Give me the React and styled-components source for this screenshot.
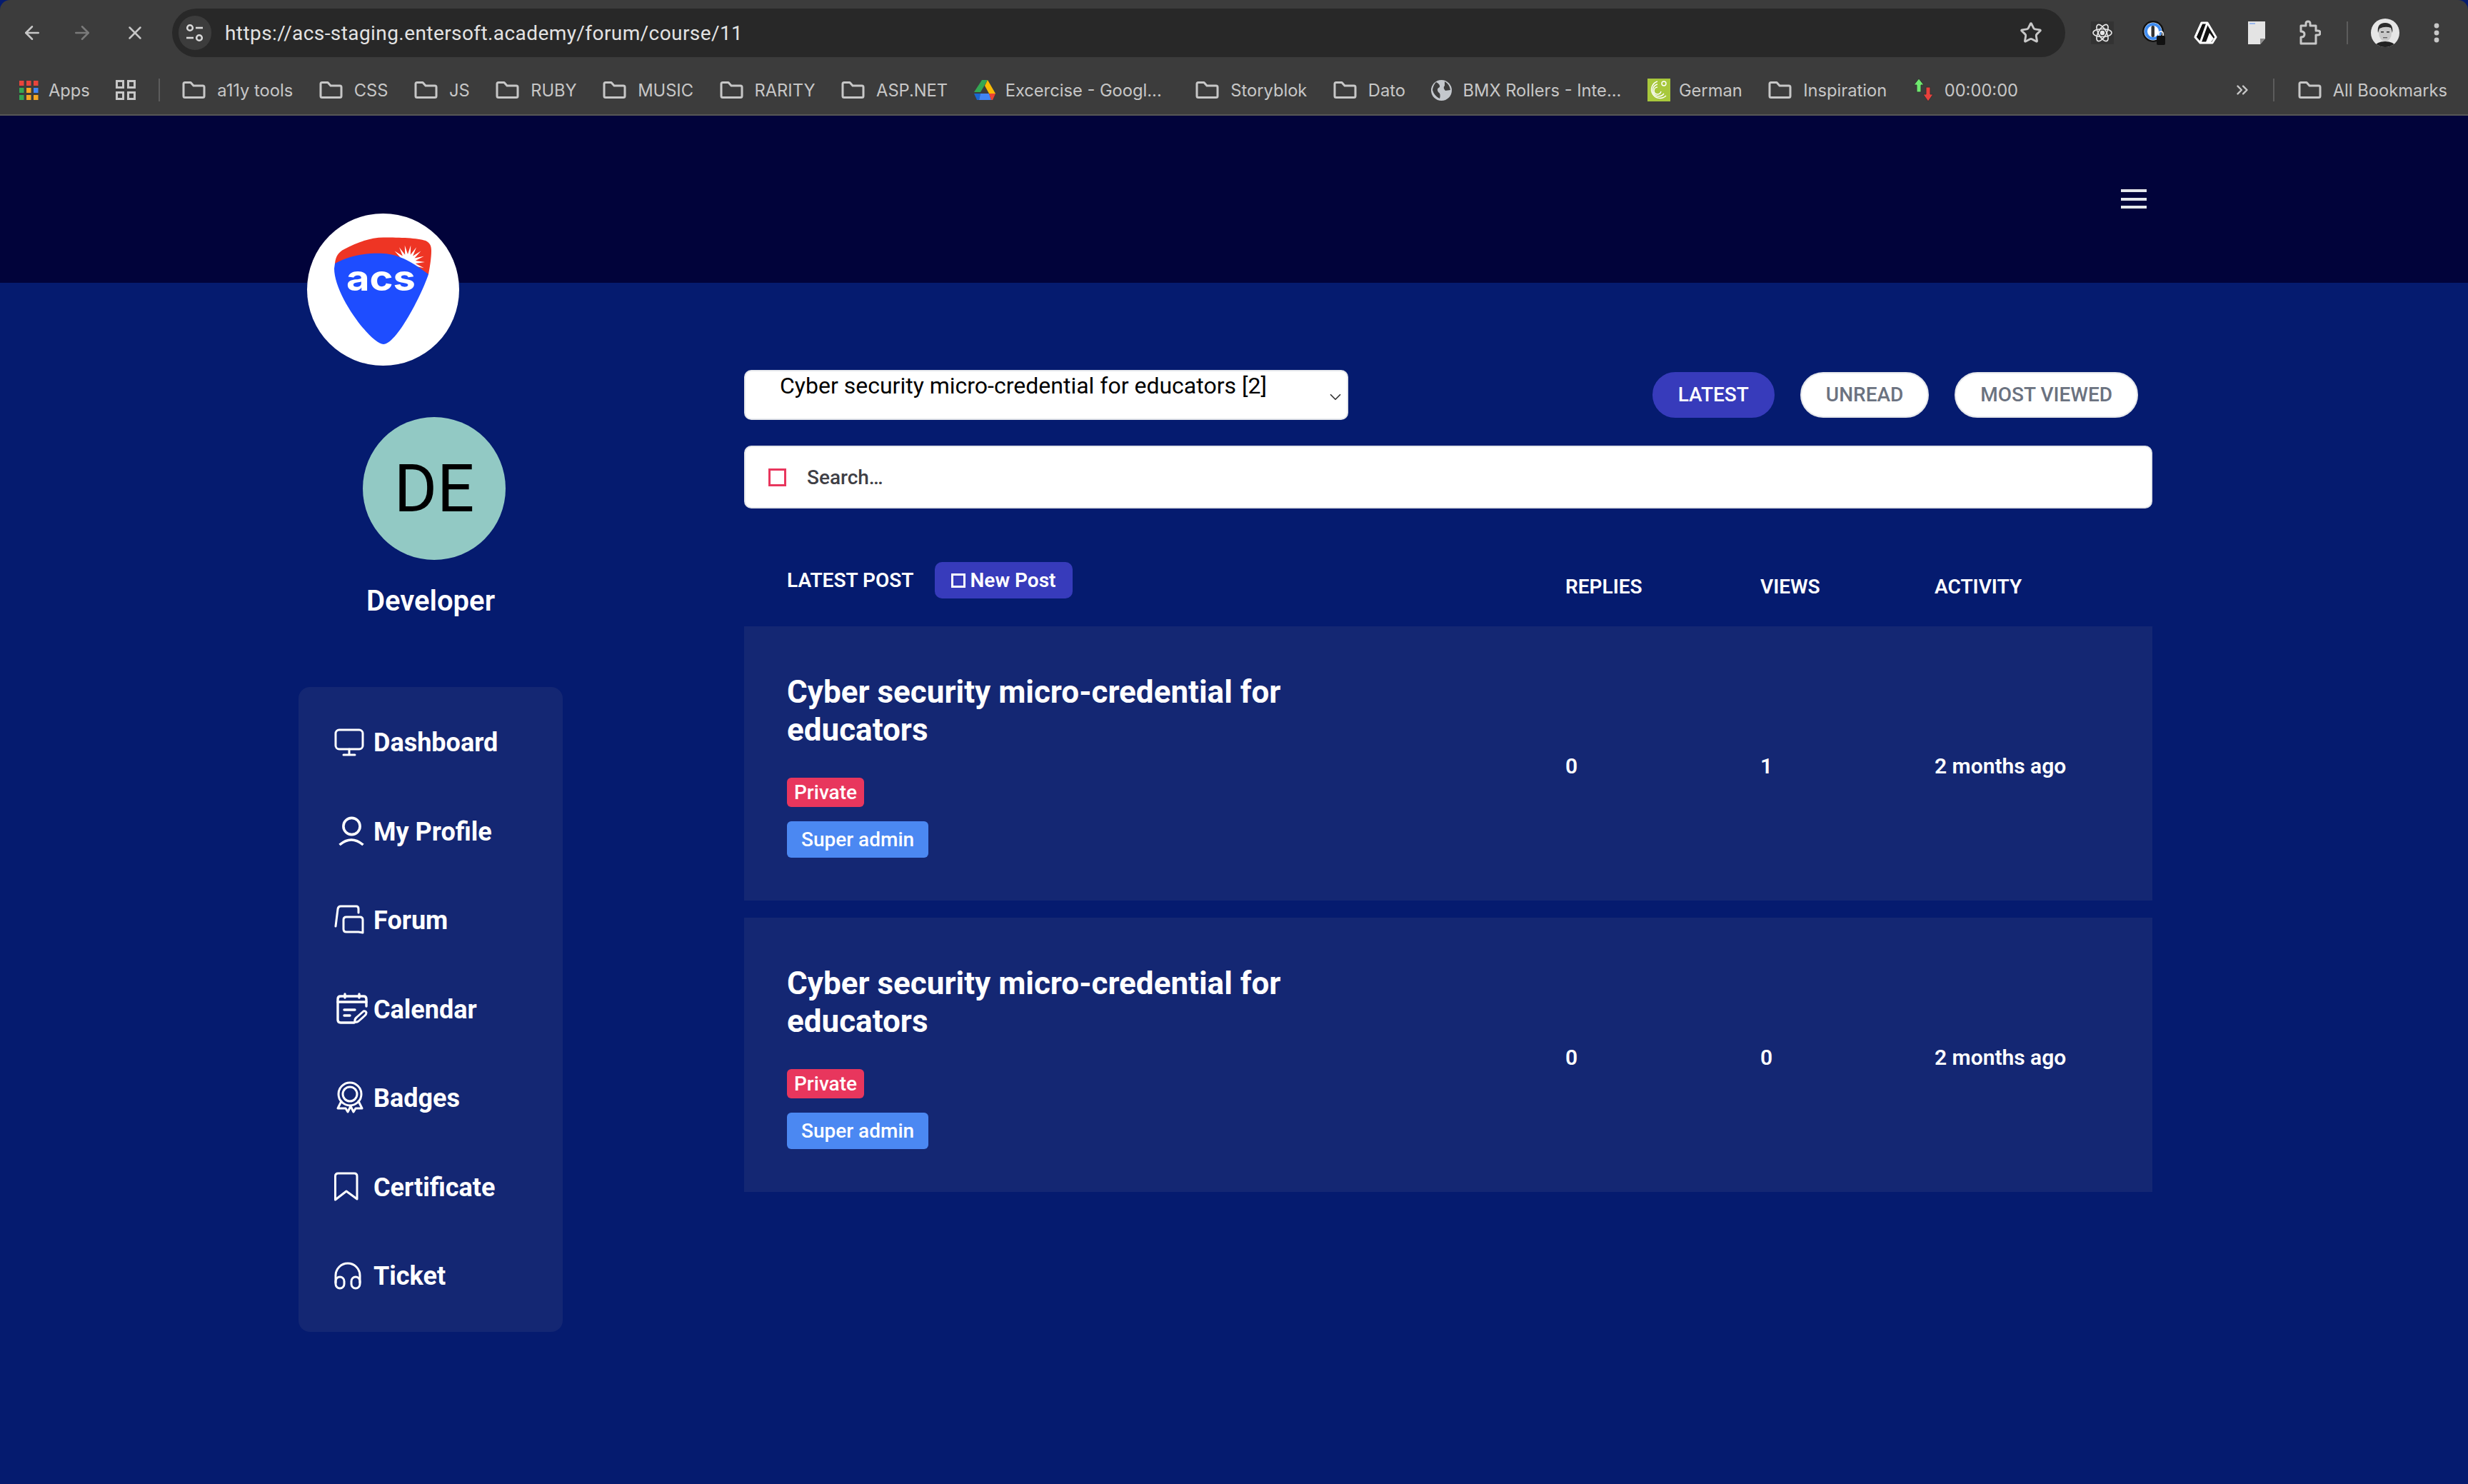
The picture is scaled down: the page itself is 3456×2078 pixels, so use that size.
import React from "react";
import styled, { createGlobalStyle } from "styled-components";
import { ArrowLeft, ArrowRight, X, Star, ChevronsRight, ChevronDown } from "lucide-react";

const GlobalStyle = createGlobalStyle`
  html, body { margin: 0; padding: 0; background: #051b6f; }
  body { font-family: Roboto, "Liberation Sans", sans-serif; }
  * { box-sizing: border-box; }
`;

const Page = styled.div`
  width: 3456px;
  height: 2078px;
  overflow: hidden;
  background: #051b6f;
`;

/* browser chrome */
const Chrome = styled.div`
  height: 162px;
  background: #3c3c3c;
  border-radius: 14px 14px 0 0;
  border-bottom: 2px solid #565656;
  font-family: Inter, Roboto, sans-serif;
`;

const Toolbar = styled.div`
  height: 92px;
  display: flex;
  align-items: flex-start;
  padding: 12px 0 0 30px;
  color: #c7c7c7;
`;

const NavButtons = styled.div`
  display: flex;
  align-items: center;
  gap: 40px;
  height: 68px;
  width: 211px;
  svg { display: block; }
  svg:last-child { margin-left: 4px; }
`;

const Omnibox = styled.div`
  width: 2651px;
  height: 68px;
  background: #282828;
  border-radius: 34px;
  display: flex;
  align-items: center;
  padding: 0 32px 0 9px;
`;

const SiteChip = styled.div`
  width: 46px;
  height: 48px;
  border-radius: 24px;
  background: #3c3c3c;
  display: flex;
  align-items: center;
  justify-content: center;
  margin-right: 19px;
`;

const Url = styled.div`
  flex: 1;
  font-family: Roboto, sans-serif;
  font-size: 28px;
  letter-spacing: 0.42px;
  color: #e3e3e3;
`;

const Extensions = styled.div`
  display: flex;
  align-items: center;
  height: 68px;
  padding-left: 36px;
  svg { display: block; flex: none; }
`;

const ExtSlot = styled.div`
  width: ${(p) => p.$w || 72}px;
  display: flex;
  justify-content: flex-start;
`;

const VSep = styled.div`
  width: 2px;
  height: 32px;
  background: #5c5c5c;
  flex: none;
  margin: 0 ${(p) => p.$mr || 0}px 0 ${(p) => p.$ml || 0}px;
`;

const Bookmarks = styled.div`
  height: 68px;
  display: flex;
  align-items: center;
  padding: 0 29px 0 27px;
  gap: 36.5px;
  color: #c7c7c7;
  font-size: 23.7px;
  svg { display: block; flex: none; }
`;

const Mark = styled.div`
  display: flex;
  align-items: center;
  gap: ${(p) => p.$gap || 16}px;
  margin-right: ${(p) => p.$after || 0}px;
  white-space: nowrap;
`;

const Spacer = styled.div`
  flex: 1;
`;

const OverflowSlot = styled.div`
  margin-right: -6px;
`;

/* page header */
const Hero = styled.header`
  position: relative;
  height: 234px;
  background: #01033a;
  display: flex;
  justify-content: flex-end;
  padding: 103px 450px 0 0;
`;

const Hamburger = styled.div`
  width: 36px;
  height: 27px;
  display: flex;
  flex-direction: column;
  gap: 7.5px;
  span {
    display: block;
    height: 4px;
    background: #e5e7eb;
  }
`;

const LogoBadge = styled.div`
  position: absolute;
  left: 430px;
  top: 137px;
  width: 213px;
  height: 213px;
  border-radius: 50%;
  background: #fff;
  svg { display: block; }
`;

const Body = styled.div`
  display: flex;
  align-items: flex-start;
  padding-left: 418px;
`;

/* sidebar */
const Sidebar = styled.aside`
  width: 370px;
  flex: none;
  display: flex;
  flex-direction: column;
  align-items: center;
  padding-top: 188px;
  margin-right: 254px;
`;

const Avatar = styled.div`
  width: 200px;
  height: 200px;
  border-radius: 50%;
  background: #92c9c4;
  color: #000;
  font-size: 92px;
  display: flex;
  align-items: center;
  justify-content: center;
  margin-left: 10px;
`;

const UserName = styled.div`
  margin-top: 32px;
  font-size: 40px;
  line-height: 52px;
  font-weight: 600;
  color: #fff;
`;

const NavPanel = styled.nav`
  width: 100%;
  margin-top: 94px;
  height: 903px;
  background: #142773;
  border-radius: 16px;
  padding: 16px 0 0 48px;
`;

const NavRow = styled.div`
  height: 124.5px;
  display: flex;
  align-items: center;
  font-size: 36px;
  font-weight: 700;
  color: #fff;
  svg { display: block; flex: none; margin-right: 7px; margin-top: -4px; }
`;

/* main column */
const Main = styled.main`
  width: 1972px;
  flex: none;
  padding-top: 122px;
`;

const TopRow = styled.div`
  display: flex;
  align-items: flex-start;
  justify-content: space-between;
  padding-right: 20px;
`;

const CourseSelect = styled.div`
  width: 846px;
  height: 70px;
  background: #fff;
  border: 2px solid #e5e7eb;
  border-radius: 10px;
  padding: 0 3px 0 48px;
  display: flex;
  justify-content: space-between;
  font-size: 32px;
  line-height: 38px;
  color: #000;
  span { padding-top: 1px; }
  svg { display: block; margin-top: 23px; }
`;

const Tabs = styled.div`
  display: flex;
  gap: 36px;
  margin-top: 3px;
`;

const Tab = styled.div`
  height: 64px;
  padding: 0 34px 2px;
  border-radius: 32px;
  display: flex;
  align-items: center;
  font-size: 28px;
  font-weight: 500;
  border: 2px solid ${(p) => (p.$active ? "#373bbb" : "#e5e7eb")};
  background: ${(p) => (p.$active ? "#373bbb" : "#fff")};
  color: ${(p) => (p.$active ? "#fff" : "#6b7280")};
`;

const SearchBox = styled.div`
  margin-top: 36px;
  height: 88px;
  background: #fff;
  border: 2px solid #e5e7eb;
  border-radius: 10px;
  padding-left: 32px;
  display: flex;
  align-items: center;
  font-size: 28px;
  font-weight: 500;
  color: #3f3f46;
`;

const MissingGlyph = styled.span`
  display: block;
  flex: none;
  width: ${(p) => p.$size}px;
  height: ${(p) => p.$size}px;
  border: ${(p) => p.$weight}px solid ${(p) => p.$color};
  margin-right: ${(p) => p.$gap}px;
`;

const Columns = styled.div`
  display: grid;
  grid-template-columns: 1090px 273px 244px 1fr;
  padding-left: 60px;
`;

const HeadRow = styled(Columns)`
  margin-top: 75px;
  height: 51px;
  align-items: flex-start;
  color: #fff;
  font-size: 28px;
  font-weight: 600;
`;

const HeadLead = styled.div`
  display: flex;
  align-items: center;
  height: 51px;
  gap: 29px;
`;

const NewPost = styled.div`
  height: 51px;
  padding: 0 23px;
  border-radius: 10px;
  background: #373bbb;
  display: flex;
  align-items: center;
`;

const HeadCell = styled.div`
  padding-top: 18px;
  line-height: 33px;
`;

const Cards = styled.div`
  margin-top: 39px;
  display: flex;
  flex-direction: column;
  gap: 24px;
`;

const Card = styled(Columns)`
  height: 384px;
  background: #142773;
  align-items: center;
  color: #fff;
`;

const CardLead = styled.div`
  display: flex;
  flex-direction: column;
  align-items: flex-start;
  padding-top: 4px;
`;

const CardTitle = styled.h2`
  margin: 1px 0 -1px;
  width: 760px;
  font-size: 44px;
  line-height: 53px;
  font-weight: 700;
`;

const Tag = styled.span`
  display: block;
  height: ${(p) => p.$h}px;
  line-height: ${(p) => p.$h}px;
  margin-top: ${(p) => p.$top}px;
  padding: 0 ${(p) => p.$pad}px;
  border-radius: 6px;
  font-size: 28px;
  font-weight: 500;
  background: ${(p) => p.$bg};
`;

const Stat = styled.div`
  padding-top: 6px;
  font-size: 30px;
  font-weight: 600;
`;

/* drawn icons */
const Folder = () => (
  <svg width="33" height="24" viewBox="0 0 33 24" fill="none" stroke="#c7c7c7" strokeWidth="3" strokeLinejoin="round">
    <path d="M2 3.5 Q2 1.5 4 1.5 H12 L16 6 H29 Q31 6 31 8 V20.5 Q31 22.5 29 22.5 H4 Q2 22.5 2 20.5 Z" />
  </svg>
);

const AppsGrid = () => {
  const colors = ["#e8453c", "#e8453c", "#e8453c", "#34a853", "#f5a623", "#4285f4", "#34a853", "#f5a623", "#f5a623"];
  return (
    <svg width="27" height="27" viewBox="0 0 27 27">
      {colors.map((c, i) => (
        <rect key={i} x={(i % 3) * 10} y={Math.floor(i / 3) * 10} width="6.5" height="7" fill={c} />
      ))}
    </svg>
  );
};

const TabGroups = () => (
  <svg width="28" height="28" viewBox="0 0 28 28" fill="none" stroke="#c7c7c7" strokeWidth="3">
    <rect x="1.5" y="1.5" width="9" height="9" />
    <rect x="17.5" y="1.5" width="9" height="9" />
    <rect x="1.5" y="17.5" width="9" height="9" />
    <rect x="17.5" y="17.5" width="9" height="9" />
  </svg>
);

const DriveIcon = () => (
  <svg width="30" height="28" viewBox="0 0 30 28">
    <path d="M11 0 H19 L9 17 H0 Z" fill="#34a853" />
    <path d="M19 0 L30 19 H21 L15 8 Z" fill="#fbbc04" />
    <path d="M0 19 H9 L7 28 H4 Z" fill="#1967d2" />
    <path d="M9 19 H21 L24 28 H7 Z" fill="#4285f4" />
    <path d="M21 19 H30 L26 28 H24 Z" fill="#ea4335" />
  </svg>
);

const GlobeIcon = () => (
  <svg width="29" height="29" viewBox="0 0 29 29">
    <circle cx="14.5" cy="14.5" r="14.5" fill="#c3c7cc" />
    <path d="M7 3 Q13 6 12 10 Q7 12 10 17 Q14 19 12 26 Q4 22 2 14 Q3 7 7 3 Z M19 2 Q26 6 27 14 L20 15 Q16 11 19 8 Z" fill="#3c3c3c" />
  </svg>
);

const GoetheIcon = () => (
  <svg width="32" height="32" viewBox="0 0 32 32" fill="none" stroke="#fff" strokeWidth="1.4">
    <rect width="32" height="32" fill="#a8c83c" stroke="none" />
    <path d="M14 4 A12 12 0 1 0 26 24" />
    <path d="M14 8 A8.5 8.5 0 1 0 23 21" />
    <path d="M14 12 A5 5 0 1 0 19 18" />
    <circle cx="23" cy="7" r="3" />
  </svg>
);

const TimerArrows = () => (
  <svg width="31" height="32" viewBox="0 0 31 32">
    <path d="M8 0 L15 9 H11 V19 H5 V9 H1 Z" fill="#6ee86e" stroke="#333" strokeWidth="1" />
    <path d="M21 32 L14 22 H18 V12 H24 V22 H28 Z" fill="#e8413c" stroke="#333" strokeWidth="1" />
  </svg>
);

const TuneIcon = () => (
  <svg width="28" height="28" viewBox="0 0 28 28" fill="none" stroke="#d8d8d8" strokeWidth="2.6">
    <circle cx="7" cy="7" r="3.8" />
    <path d="M15 7 H25" />
    <path d="M2 21 H12" />
    <circle cx="20" cy="21" r="3.8" />
  </svg>
);

const ReactExt = () => (
  <svg width="32" height="32" viewBox="0 0 32 32" fill="none" stroke="#e8e8e8" strokeWidth="1.6">
    <rect width="32" height="32" fill="#333" stroke="none" />
    <ellipse cx="16" cy="16" rx="13" ry="5.5" />
    <ellipse cx="16" cy="16" rx="13" ry="5.5" transform="rotate(60 16 16)" />
    <ellipse cx="16" cy="16" rx="13" ry="5.5" transform="rotate(120 16 16)" />
    <circle cx="16" cy="16" r="2.4" fill="#e8e8e8" />
  </svg>
);

const PasswordExt = () => (
  <svg width="34" height="34" viewBox="0 0 34 34">
    <circle cx="15" cy="15" r="15" fill="#111" />
    <circle cx="15" cy="15" r="12.5" fill="#fff" />
    <circle cx="15" cy="15" r="10" fill="none" stroke="#3f8cf0" strokeWidth="4" />
    <rect x="12.5" y="7" width="4.5" height="16" rx="2" fill="#333" />
    <rect x="20" y="21" width="12" height="13" rx="2" fill="#111" />
    <path d="M23 21 V18 A3 3 0 0 1 29 18 V21" fill="none" stroke="#fff" strokeWidth="1.6" />
  </svg>
);

const PrismExt = () => (
  <svg width="33" height="32" viewBox="0 0 33 32" fill="none" stroke="#fff" strokeWidth="3" strokeLinejoin="round">
    <path d="M11 2 H19 L31 22 L26 30 H9 L2 22 Z" fill="#111" />
    <path d="M11 2 L2 22 M19 2 L9 30" />
    <path d="M22 16 L28 24 L24 29 L17 29 Z" fill="#fff" stroke="none" />
  </svg>
);

const SheetExt = () => (
  <svg width="24" height="32" viewBox="0 0 24 32">
    <path d="M0 0 H24 V24 L17 32 H0 Z" fill="#e4e4e4" />
    <path d="M2 2 H10 V4 H2 Z" fill="#9ab8ee" />
    <path d="M24 24 L17 32 V24 Z" fill="#8a8a8a" />
  </svg>
);

const ExtensionsIcon = () => (
  <svg width="32" height="36" viewBox="0 0 32 36" fill="none" stroke="#c7c7c7" strokeWidth="3" strokeLinejoin="round">
    <path d="M4 8 H11 V5 Q11 2 14 2 Q17 2 17 5 V8 H25 V15 H28 Q31 15 31 18 Q31 21 28 21 H25 V33 H4 V24 Q9 24 9 20 Q9 16 4 16 Z" />
  </svg>
);

const ProfilePic = () => (
  <svg width="40" height="40" viewBox="0 0 40 40">
    <defs>
      <clipPath id="pic">
        <circle cx="20" cy="20" r="20" />
      </clipPath>
    </defs>
    <g clipPath="url(#pic)">
      <rect width="40" height="40" fill="#e6e6e6" />
      <ellipse cx="20" cy="20" rx="9" ry="12" fill="#c9c9c9" />
      <path d="M10 20 Q8 6 20 6 Q32 6 30 20 L28 13 Q20 10 12 14 Z" fill="#2b2b2b" />
      <rect x="14" y="18" width="4" height="1.6" fill="#333" />
      <rect x="22" y="18" width="4" height="1.6" fill="#333" />
      <rect x="17" y="26" width="6" height="1.4" fill="#666" />
      <path d="M4 40 Q8 32 20 32 Q32 32 36 40 Z" fill="#222" />
    </g>
  </svg>
);

const MoreDots = () => (
  <svg width="8" height="28" viewBox="0 0 8 28" fill="#c7c7c7">
    <circle cx="4" cy="4" r="3.4" />
    <circle cx="4" cy="14" r="3.4" />
    <circle cx="4" cy="24" r="3.4" />
  </svg>
);

const sunRays = () => {
  const cx = 141;
  const cy = 68;
  const pts = [];
  for (let a = 160; a <= 400; a += 10) {
    const long = (a - 160) % 20 === 0;
    const r = long ? (a === 160 || a === 400 ? 32 : 24) : 11;
    const rad = (a * Math.PI) / 180;
    pts.push(`${(cx + r * Math.cos(rad)).toFixed(1)},${(cy + r * Math.sin(rad)).toFixed(1)}`);
  }
  return pts.join(" ");
};

const AcsLogo = () => (
  <svg width="213" height="213" viewBox="0 0 213 213">
    <path
      d="M39 70 C40 60 44 54 52 50 C70 40 90 33.4 107 33.4 C130 33.4 155 34 166 38 C172 41 174 45 174 52 C174 62 172 75 170 85 L100 90 Z"
      fill="#ee3524"
    />
    <polygon points={sunRays()} fill="#fff" />
    <path
      d="M39 70 C60 58 85 55 107 56 C130 57 150 70 170 85 C160 115 125 183 107 183 C90 183 38 115 38 77 Z"
      fill="#1e4dff"
    />
    <text x="55" y="108" fontFamily="Inter, sans-serif" fontWeight="700" fontSize="50" fill="#fff" textLength="97" lengthAdjust="spacingAndGlyphs">
      acs
    </text>
  </svg>
);

const NavGlyph = ({ children }) => (
  <svg width="50" height="50" viewBox="0 0 50 50" fill="none" stroke="#fff" strokeWidth="3" strokeLinecap="round" strokeLinejoin="round">
    {children}
  </svg>
);

const navItems = [
  {
    label: "Dashboard",
    icon: (
      <>
        <rect x="4" y="9" width="38" height="27" rx="5" />
        <path d="M23 36 V44 M15 44 H31" />
      </>
    ),
  },
  {
    label: "My Profile",
    icon: (
      <>
        <circle cx="26.5" cy="19" r="11.6" strokeWidth="3.6" />
        <path d="M9.5 45 Q26 31 42.5 45" strokeWidth="3.6" strokeLinecap="butt" />
      </>
    ),
  },
  {
    label: "Forum",
    icon: (
      <>
        <path d="M4 35 L7 11 Q7.5 7 11 7 H33 Q36 7 36 11 V16" />
        <path d="M19 22 H38 Q42 22 42 26 V44 L36 43 H19 Q15 43 15 39 V26 Q15 22 19 22 Z" />
      </>
    ),
  },
  {
    label: "Calendar",
    icon: (
      <>
        <path d="M30 45 H11 Q7 45 7 41 V12 Q7 8 11 8 H43 Q47 8 47 12 V22" strokeWidth="3.4" />
        <path d="M7 16 H47 M17 5 V10 M37 5 V10 M16 27 H31 M16 35 H24" strokeWidth="3.4" />
        <path d="M31 44 Q30 40 34 37 L43 29 Q46 28 47 31 Q47 33 45 35 L36 43 Q33 45 31 44 Z" />
      </>
    ),
  },
  {
    label: "Badges",
    icon: (
      <>
        <circle cx="24" cy="21" r="16" />
        <circle cx="24" cy="21" r="10" />
        <path d="M12 31 L7 41 L18 41 L21 46 L25 38 L29 46 L32 41 L41 41 L36 31" />
      </>
    ),
  },
  {
    label: "Certificate",
    icon: <path d="M3.5 11 Q3.5 7 7.5 7 H30 Q34 7 34 11 V43 L19 32 L3.5 44 Z" />,
  },
  {
    label: "Ticket",
    icon: (
      <>
        <path d="M4 36 V26 A17 17 0 0 1 38 26 V36" />
        <rect x="4" y="28" width="12" height="16" rx="6" />
        <rect x="26" y="28" width="12" height="16" rx="6" />
      </>
    ),
  },
];

const folderMarks = (names) =>
  names.map((name) => (
    <Mark key={name}>
      <Folder />
      {name}
    </Mark>
  ));

const posts = [
  { id: 1, replies: 0, views: 1 },
  { id: 2, replies: 0, views: 0 },
];

const App = () => {
  return (
    <Page>
      <GlobalStyle />
      <Chrome>
        <Toolbar>
          <NavButtons>
            <ArrowLeft size={30} color="#c7c7c7" strokeWidth={2} />
            <ArrowRight size={30} color="#7a7a7a" strokeWidth={2} />
            <X size={30} color="#c7c7c7" strokeWidth={2} />
          </NavButtons>
          <Omnibox>
            <SiteChip>
              <TuneIcon />
            </SiteChip>
            <Url>https://acs-staging.entersoft.academy/forum/course/11</Url>
            <Star size={32} color="#c7c7c7" strokeWidth={2.2} />
          </Omnibox>
          <Extensions>
            <ExtSlot><ReactExt /></ExtSlot>
            <ExtSlot><PasswordExt /></ExtSlot>
            <ExtSlot $w={76}><PrismExt /></ExtSlot>
            <ExtSlot $w={70}><SheetExt /></ExtSlot>
            <ExtSlot $w={68}><ExtensionsIcon /></ExtSlot>
            <VSep />
            <ExtSlot $w={32} />
            <ExtSlot $w={88}><ProfilePic /></ExtSlot>
            <MoreDots />
          </Extensions>
        </Toolbar>
        <Bookmarks>
          <Mark $gap={14}>
            <AppsGrid />
            Apps
          </Mark>
          <TabGroups />
          <VSep $ml={-5} $mr={-5} />
          {folderMarks(["a11y tools", "CSS", "JS", "RUBY", "MUSIC", "RARITY", "ASP.NET"])}
          <Mark $gap={14} $after={11}>
            <DriveIcon />
            Excercise - Googl...
          </Mark>
          {folderMarks(["Storyblok", "Dato"])}
          <Mark $gap={15}>
            <GlobeIcon />
            BMX Rollers - Inte...
          </Mark>
          <Mark $gap={12}>
            <GoetheIcon />
            German
          </Mark>
          {folderMarks(["Inspiration"])}
          <Mark $gap={13}>
            <TimerArrows />
            00:00:00
          </Mark>
          <Spacer />
          <OverflowSlot>
            <ChevronsRight size={26} color="#c7c7c7" strokeWidth={2.2} />
          </OverflowSlot>
          <VSep $mr={-4} />
          {folderMarks(["All Bookmarks"])}
        </Bookmarks>
      </Chrome>

      <Hero>
        <LogoBadge>
          <AcsLogo />
        </LogoBadge>
        <Hamburger>
          <span />
          <span />
          <span />
        </Hamburger>
      </Hero>

      <Body>
        <Sidebar>
          <Avatar>DE</Avatar>
          <UserName>Developer</UserName>
          <NavPanel>
            {navItems.map((item) => (
              <NavRow key={item.label}>
                <NavGlyph>{item.icon}</NavGlyph>
                {item.label}
              </NavRow>
            ))}
          </NavPanel>
        </Sidebar>

        <Main>
          <TopRow>
            <CourseSelect>
              <span>Cyber security micro-credential for educators [2]</span>
              <ChevronDown size={26} color="#333" strokeWidth={1.6} />
            </CourseSelect>
            <Tabs>
              <Tab $active>LATEST</Tab>
              <Tab>UNREAD</Tab>
              <Tab>MOST VIEWED</Tab>
            </Tabs>
          </TopRow>

          <SearchBox>
            <MissingGlyph $size={25} $weight={3} $color="#e8365d" $gap={29} />
            Search…
          </SearchBox>

          <HeadRow>
            <HeadLead>
              LATEST POST
              <NewPost>
                <MissingGlyph $size={20} $weight={3} $color="#fff" $gap={7} />
                New Post
              </NewPost>
            </HeadLead>
            <HeadCell>REPLIES</HeadCell>
            <HeadCell>VIEWS</HeadCell>
            <HeadCell>ACTIVITY</HeadCell>
          </HeadRow>

          <Cards>
            {posts.map((post) => (
              <Card key={post.id}>
                <CardLead>
                  <CardTitle>Cyber security micro-credential for educators</CardTitle>
                  <Tag $h={41} $top={41} $pad={10} $bg="#e8365d">Private</Tag>
                  <Tag $h={51} $top={20} $pad={20} $bg="#4b88f2">Super admin</Tag>
                </CardLead>
                <Stat>{post.replies}</Stat>
                <Stat>{post.views}</Stat>
                <Stat>2 months ago</Stat>
              </Card>
            ))}
          </Cards>
        </Main>
      </Body>
    </Page>
  );
};

export default App;
